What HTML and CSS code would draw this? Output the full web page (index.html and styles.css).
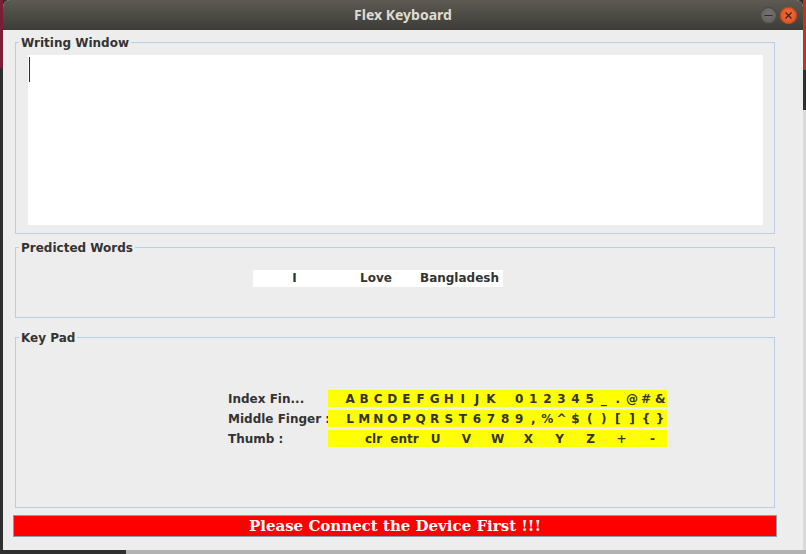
FILE: index.html
```html
<!DOCTYPE html>
<html>
<head>
<meta charset="utf-8">
<title>Flex Keyboard</title>
<link rel="stylesheet" href="styles.css">
</head>
<body>
<div class="window">
  <div class="titlebar">
    <div></div>
    <div class="title">Flex Keyboard</div>
    <div class="controls">
      <span class="btn min"><svg width="17" height="17" viewBox="0 0 17 17"><line x1="4.5" y1="8.5" x2="12.5" y2="8.5" stroke="#2e2d2a" stroke-width="1.2"/></svg></span>
      <span class="btn close"><svg width="17" height="17" viewBox="0 0 17 17"><path d="M5.5 5.5 L11.5 11.5 M11.5 5.5 L5.5 11.5" stroke="#3a2418" stroke-width="1.2"/></svg></span>
    </div>
  </div>
  <div class="content">
    <fieldset class="group writing">
      <legend>Writing Window</legend>
      <div class="textarea"><span class="caret"></span></div>
    </fieldset>
    <fieldset class="group predicted">
      <legend>Predicted Words</legend>
      <div class="words"><span>I</span><span>Love</span><span>Bangladesh</span></div>
    </fieldset>
    <fieldset class="group keypad">
      <legend>Key Pad</legend>
      <div class="keys">
        <div class="label">Index Fin...</div>
        <div class="row cells14"><span>A</span><span>B</span><span>C</span><span>D</span><span>E</span><span>F</span><span>G</span><span>H</span><span>I</span><span>J</span><span>K</span><span></span><span>0</span><span>1</span><span>2</span><span>3</span><span>4</span><span>5</span><span>_</span><span>.</span><span>@</span><span>#</span><span>&amp;</span></div>
        <div class="label">Middle Finger :</div>
        <div class="row cells14"><span>L</span><span>M</span><span>N</span><span>O</span><span>P</span><span>Q</span><span>R</span><span>S</span><span>T</span><span>6</span><span>7</span><span>8</span><span>9</span><span>,</span><span>%</span><span>^</span><span>$</span><span>(</span><span>)</span><span>[</span><span>]</span><span>{</span><span>}</span></div>
        <div class="label">Thumb :</div>
        <div class="row cells31"><span>clr</span><span>entr</span><span>U</span><span>V</span><span>W</span><span>X</span><span>Y</span><span>Z</span><span>+</span><span>-</span></div>
      </div>
    </fieldset>
    <div class="status">Please Connect the Device First !!!</div>
  </div>
</div>
</body>
</html>
```
FILE: styles.css
```css
html, body {
  margin: 0;
  padding: 0;
}
body {
  width: 806px;
  height: 554px;
  overflow: hidden;
  background:
    linear-gradient(#7b1d37, #7b1d37) left 0 top 0 / 3px 68px no-repeat,
    linear-gradient(#b6391b, #b6391b) right 0 top 0 / 3px 70px no-repeat,
    linear-gradient(#dadada, #dadada) right 0 top 110px / 3px 440px no-repeat,
    linear-gradient(#b2b2b2, #b2b2b2) left 126px bottom 0 / 680px 4px no-repeat,
    #2f2f2f;
  font-family: "DejaVu Sans", sans-serif;
}
.window {
  margin-left: 3px;
  width: 800px;
  height: 550px;
  background: #ededed;
  border-radius: 7px 7px 0 0;
  overflow: hidden;
  display: flex;
  flex-direction: column;
}
.titlebar {
  height: 30px;
  flex: none;
  background: linear-gradient(#5c5a52, #3d3c37);
  display: grid;
  grid-template-columns: 1fr auto 1fr;
  align-items: center;
}
.title {
  font-family: "Noto Sans", "DejaVu Sans", sans-serif;
  font-weight: bold;
  font-size: 14px;
  color: #dfdbd2;
  line-height: 30px;
}
.controls {
  justify-self: end;
  display: flex;
  gap: 3px;
  padding-right: 6px;
}
.btn {
  width: 17px;
  height: 17px;
  border-radius: 50%;
  display: block;
}
.btn svg { display: block; }
.btn.min {
  background: radial-gradient(circle at 50% 40%, #74736e, #5a5955);
  box-shadow: inset 0 0 0 1px #45443f;
}
.btn.close {
  background: radial-gradient(circle at 50% 40%, #f0683a, #e0501f);
  box-shadow: inset 0 0 0 1px #b8461f;
}
.content {
  padding-left: 10px;
  display: flex;
  flex-direction: column;
}
.group {
  margin: 0 0 0 2px;
  padding: 0;
  width: 760px;
  box-sizing: border-box;
  border: 1px solid #b9cde3;
  min-width: 0;
}
.group legend {
  font-weight: bold;
  font-size: 12px;
  line-height: 14px;
  color: #333333;
  padding: 1px 2px 0 2px;
  margin-left: 3px;
}
.writing {
  margin-top: 5px;
}
.textarea {
  margin: 5px 11px 8px 12px;
  height: 170px;
  background: #ffffff;
  display: flex;
}
.caret {
  width: 1px;
  height: 25px;
  margin: 2px 0 0 1px;
  background: #2a2a2a;
}
.predicted {
  margin-top: 6px;
}
.words {
  margin: 15px 0 30px 237px;
  width: 250px;
  height: 17px;
  background: #ffffff;
  display: grid;
  grid-template-columns: 83px 80px 87px;
  font-weight: bold;
  font-size: 12px;
  line-height: 17px;
  color: #333333;
  text-align: center;
}
.keypad {
  margin-top: 12px;
}
.keys {
  margin: 45px 0 60px 212px;
  display: grid;
  grid-template-columns: 100px 339px;
  grid-auto-rows: 17px;
  row-gap: 3px;
  font-weight: bold;
  font-size: 12px;
  line-height: 18px;
  color: #333333;
}
.label {
  white-space: nowrap;
}
.row {
  background: #ffff00;
  display: grid;
  text-align: center;
  white-space: nowrap;
}
.cells14 {
  grid-template-columns: repeat(23, 14.1px);
  padding-left: 15px;
}
.cells31 {
  grid-template-columns: repeat(10, 31px);
  padding-left: 30px;
}
.status {
  margin-top: 7px;
  width: 764px;
  height: 22px;
  box-sizing: border-box;
  border: 1px solid #8b9bb4;
  background: #ff0000;
  color: #ffffff;
  font-family: "DejaVu Serif", serif;
  font-weight: bold;
  font-size: 15px;
  line-height: 21px;
  text-align: center;
}
```
